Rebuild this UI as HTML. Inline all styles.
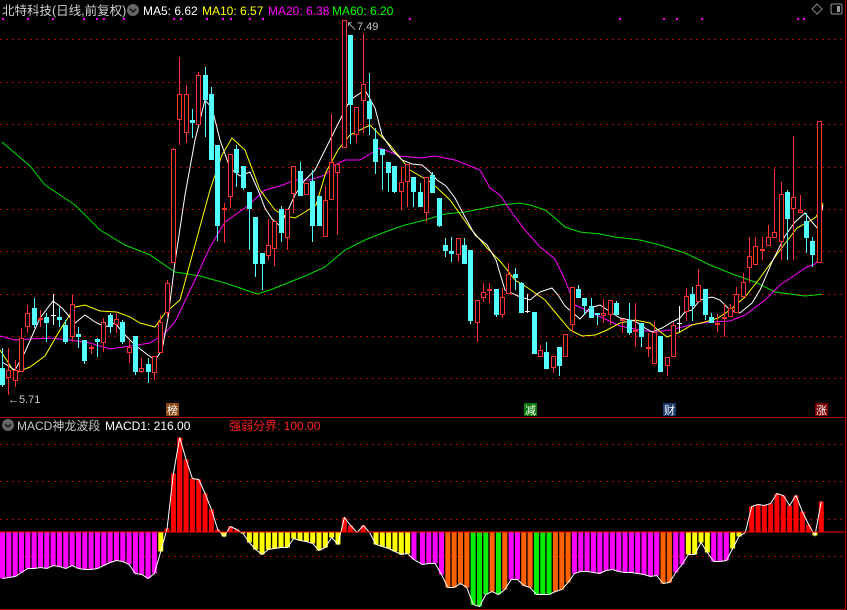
<!DOCTYPE html>
<html><head><meta charset="utf-8"><style>
html,body{margin:0;padding:0;background:#000;width:847px;height:610px;overflow:hidden}
svg{display:block}
text{font-family:"Liberation Sans","Noto Sans CJK SC",sans-serif}
</style></head><body>
<svg id="s" width="847" height="610" viewBox="0 0 847 610" xmlns="http://www.w3.org/2000/svg">
<rect width="847" height="610" fill="#000"/>
<g id="grid"></g>
<g id="ma"></g>
<g id="k"></g>
<g id="h"></g>
<line x1="0" y1="417.5" x2="846" y2="417.5" stroke="#b00000" stroke-width="1"/>
<line x1="0" y1="609.5" x2="846" y2="609.5" stroke="#b00000" stroke-width="1"/>
<line x1="845.5" y1="0" x2="845.5" y2="610" stroke="#b00000" stroke-width="1"/>
<text x="2" y="15" font-size="12.5" fill="#d0d0d0">北特科技(日线,前复权)</text>
<circle cx="133" cy="10" r="6" fill="#666"/><path d="M130 9 L133 12 L136 9" stroke="#111" stroke-width="1.4" fill="none"/>
<text x="143" y="15" font-size="12" fill="#ffffff">MA5: 6.62</text>
<text x="202" y="15" font-size="12" fill="#ffff00">MA10: 6.57</text>
<text x="268" y="15" font-size="12" fill="#ff00ff">MA20: 6.38</text>
<text x="332" y="15" font-size="12" fill="#00ff00">MA60: 6.20</text>
<path d="M817 4 L822 9 L817 14 L812 9 Z" stroke="#888" fill="none"/>
<rect x="831" y="4" width="11" height="10" rx="1.5" stroke="#999" fill="none"/><rect x="837" y="6" width="3" height="6" fill="#999"/>
<text x="8" y="403" font-size="11" fill="#c8c8c8">←5.71</text>
<text x="346" y="30" font-size="11" fill="#c8c8c8">↖7.49</text>
<rect x="166" y="403" width="13" height="13" fill="#8b4513"/><text x="167" y="414" font-size="11" fill="#fff">榜</text>
<rect x="524" y="403" width="13" height="13" fill="#0a7a0a"/><text x="525" y="414" font-size="11" fill="#fff">减</text>
<rect x="663" y="403" width="13" height="13" fill="#1a3a6a"/><text x="664" y="414" font-size="11" fill="#fff">财</text>
<rect x="815" y="403" width="13" height="13" fill="#7a0000"/><text x="816" y="414" font-size="11" fill="#fff">涨</text>
<circle cx="8" cy="425" r="6" fill="#666"/><path d="M5 424 L8 427 L11 424" stroke="#111" stroke-width="1.4" fill="none"/>
<text x="17" y="430" font-size="12" fill="#c8c8c8">MACD神龙波段</text>
<text x="105" y="430" font-size="12" fill="#ffffff">MACD1: 216.00</text>
<text x="229" y="430" font-size="12" fill="#ff2020">强弱分界: 100.00</text>
</svg>
<script>
var NS="http://www.w3.org/2000/svg";
function el(p,t,a){var e=document.createElementNS(NS,t);for(var k in a)e.setAttribute(k,a[k]);document.getElementById(p).appendChild(e);return e;}
// grid
[39,82,124,167,209,251,294,336,378,444,481,519,556].forEach(function(y){el("grid","line",{x1:0,y1:y+.5,x2:845,y2:y+.5,stroke:"#b00000","stroke-dasharray":"2,4"});});
[2,27,52,83,96,103,123,173,180,206,222,230,249,262,409,619,663,676,701,797,803].forEach(function(x){el("grid","rect",{x:x,y:18,width:2,height:2,fill:"#ff00ff"});});
// candles: [type, bodyTop, bodyBot, wickTop, wickBot]  type r=red c=cyan w=white doji
var K=[
["c",368,385,348,387],["r",370,378,348,395],["r",370,381,360,387],["r",338,372,328,372],["r",313,327,305,333],["c",308,325,298,328],["r",318,320,310,327],["c",317,323,313,342],["w",315,316,294,325],["c",317,320,307,327],
["c",325,342,320,344],["r",304,337,295,342],["c",334,337,327,348],["c",340,361,340,364],["r",347,349,345,354],["c",339,342,338,357],["r",322,343,318,352],["c",315,327,313,333],["r",319,325,313,333],["c",322,342,320,344],
["r",347,353,340,363],["c",336,372,336,375],["r",368,372,358,373],["c",364,372,358,383],["r",356,373,356,380],["r",322,353,315,353],["r",283,313,280,317],["r",149,263,148,263],["r",94,120,57,145],["r",94,133,85,143],
["c",120,123,109,138],["r",75,125,72,125],["c",75,100,67,137],["c",94,160,87,160],["c",145,226,145,241],["r",208,210,203,243],["r",154,197,154,208],["c",149,173,145,187],["c",166,188,166,190],["c",192,209,192,250],
["c",217,264,217,277],["c",253,264,253,290],["r",245,256,219,260],["r",221,249,221,266],["c",209,233,206,242],["r",209,238,209,250],["r",166,194,166,213],["c",171,196,162,196],["r",183,195,183,195],["c",181,226,170,242],
["c",196,226,196,226],["r",200,237,186,237],["r",162,200,114,200],["r",164,173,164,235],["r",20,148,20,148],["c",35,105,35,144],["r",107,135,107,143],["r",84,101,34,133],["c",101,119,73,135],["c",139,162,128,174],
["c",149,155,149,190],["c",162,173,162,192],["c",166,192,166,193],["r",182,192,167,210],["r",164,182,164,207],["c",177,192,177,207],["c",192,207,183,207],["r",177,213,177,222],["c",175,193,172,193],["c",198,226,198,227],
["c",245,251,238,257],["c",251,254,237,262],["r",238,255,238,262],["c",245,264,238,264],["c",250,321,250,324],["r",300,323,300,342],["r",292,298,283,302],["r",289,291,283,303],["c",289,315,289,317],["r",297,315,288,318],
["r",274,294,263,294],["c",274,278,268,290],["c",283,313,282,313],["w",311,312,294,313],["c",312,354,312,354],["r",350,357,345,357],["c",352,369,342,369],["r",356,368,356,373],["c",347,366,347,376],["r",334,357,334,357],
["r",287,325,287,332],["c",289,298,285,298],["c",298,306,298,315],["c",306,318,298,318],["c",313,315,313,325],["r",313,316,299,323],["r",300,315,300,325],["c",303,315,301,315],["r",319,321,319,333],["c",320,333,303,335],
["r",330,332,303,347],["c",323,337,323,347],["r",347,349,333,357],["r",332,364,322,364],["c",336,372,336,372],["r",357,366,357,376],["r",325,357,322,357],["w",323,324,306,332],["r",296,312,288,321],["c",294,306,287,321],
["r",285,302,269,302],["c",289,315,289,320],["c",317,323,313,323],["r",323,325,314,332],["r",317,319,304,337],["r",308,317,304,317],["r",294,313,287,313],["r",282,297,273,297],["r",256,268,237,283],["r",246,265,237,265],
["r",249,251,237,260],["r",237,246,225,246],["r",232,238,169,238],["r",194,242,182,260],["c",192,219,190,260],["r",197,209,136,260],["r",210,213,195,213],["c",221,238,213,253],["c",241,255,237,267],["r",121,263,121,263]];
var S=6.33;
K.forEach(function(c,i){
 var x=Math.round(i*S)+2.5,col=c[0]=="r"?"#ff3030":c[0]=="c"?"#54ffff":"#ffffff";
 el("k","line",{x1:x,y1:c[3],x2:x,y2:c[4],stroke:col,"stroke-width":1});
 var h=Math.max(1,c[2]-c[1]);
 if(c[0]=="r"){el("k","rect",{x:x-2,y:c[1]+.5,width:4,height:h-1<1?1:h-1,fill:"#000",stroke:col,"stroke-width":1});}
 else if(c[0]=="c"){el("k","rect",{x:x-2.5,y:c[1],width:5,height:h,fill:col});}
 else{el("k","line",{x1:x-2.5,y1:c[1]+.5,x2:x+2.5,y2:c[1]+.5,stroke:col});}
});
function pl(pts,col){el("ma","polyline",{points:pts.map(function(p){return p.join(",")}).join(" "),fill:"none",stroke:col,"stroke-width":1});}
pl([[2,142],[30,166],[45,185],[75,205],[100,230],[125,245],[150,255],[175,272],[200,276],[225,283],[240,288],[257,294],[270,290],[290,282],[305,276],[325,267],[345,250],[365,240],[385,232],[405,225],[425,220],[445,214],[465,212],[485,208],[500,205],[520,203],[530,205],[545,210],[555,218],[565,227],[580,232],[600,234],[615,237],[640,240],[660,245],[685,253],[710,265],[735,275],[755,282],[775,292],[790,294],[805,296],[815,295],[822,294]],"#00e000");
pl([[0,336],[15,340],[30,339],[50,338],[70,340],[90,343],[110,349],[130,346],[150,343],[163,335],[175,322],[195,280],[210,247],[225,222],[245,208],[265,190],[280,186],[295,180],[310,180],[325,175],[335,165],[345,160],[360,160],[380,148],[400,156],[420,158],[435,156],[455,160],[470,166],[480,170],[490,188],[500,195],[510,210],[525,230],[540,247],[555,259],[565,280],[575,305],[590,312],[605,319],[620,326],[640,330],[655,332],[670,330],[690,325],[710,322],[730,321],[745,315],[765,300],[780,285],[795,275],[805,268],[815,264],[822,255]],"#ff00ff");
pl([[0,350],[15,373],[30,367],[45,356],[60,330],[75,307],[85,305],[100,311],[117,312],[130,317],[140,323],[155,327],[165,313],[180,300],[195,245],[210,190],[222,155],[232,138],[245,150],[260,190],[275,210],[285,216],[295,218],[305,212],[316,205],[326,172],[338,150],[350,135],[370,125],[390,145],[410,170],[432,183],[450,200],[470,228],[487,248],[500,261],[515,280],[528,288],[545,300],[560,318],[570,330],[582,336],[595,335],[605,331],[620,323],[635,320],[650,323],[658,330],[667,337],[680,332],[692,325],[705,322],[718,318],[730,310],[745,297],[760,278],[780,250],[797,228],[808,222],[816,217],[823,203]],"#ffff00");
pl([[2,362],[15,370],[25,352],[40,318],[53,301],[62,308],[75,323],[85,315],[95,322],[105,327],[115,323],[125,335],[135,345],[148,355],[155,360],[162,350],[168,318],[175,262],[185,195],[195,140],[205,100],[212,108],[220,140],[230,168],[240,176],[250,172],[258,190],[265,208],[272,219],[280,226],[288,210],[295,195],[305,180],[315,170],[320,160],[330,140],[340,120],[350,100],[365,90],[375,108],[382,135],[392,150],[402,160],[412,164],[422,165],[430,172],[437,180],[446,186],[455,198],[465,217],[475,235],[487,245],[496,260],[505,290],[518,296],[530,300],[540,292],[552,288],[558,295],[565,306],[580,319],[590,308],[600,305],[612,313],[620,318],[635,321],[645,328],[652,332],[662,328],[672,322],[680,318],[685,312],[692,310],[700,300],[712,297],[720,300],[730,310],[740,313],[752,303],[760,290],[772,262],[785,236],[795,222],[805,213],[812,222],[818,229],[823,205]],"#ffffff");
// histogram
var M="#ff00ff",Y="#ffff00",R="#ff0000",O="#ff6000",G="#00ee00";
var L=[[-47,M],[-46,M],[-45,M],[-41,M],[-37,M],[-37,M],[-36,M],[-37,M],[-34,M],[-35,M],[-37,M],[-34,M],[-37,M],[-38,M],[-38,M],[-37,M],[-34,M],[-31,M],[-29,M],[-30,M],[-33,M],[-42,M],[-43,M],[-47,M],[-42,M],
[-20,Y],[3,R],[58,R],[94,R],[72,R],[53,R],[52,R],[38,R],[22,R],[2,R],[-5,Y],[5,R],[2,R],[-2,Y],[-11,Y],[-18,Y],[-23,Y],[-18,Y],[-17,Y],[-16,Y],[-16,Y],[-7,Y],[-9,Y],[-10,Y],[-12,Y],[-19,Y],[-16,Y],[-6,Y],[-13,Y],
[14,R],[6,R],[-1,Y],[6,R],[-1,Y],[-13,Y],[-15,Y],[-17,Y],[-20,Y],[-23,Y],[-22,Y],[-28,M]];
var Rr=[[-33,M],[-32,M],[-32,M],[-43,M],[-56,O],[-56,O],[-52,O],[-56,O],[-73,G],[-75,G],[-63,G],[-60,O],[-63,G],[-58,O],[-48,M],[-48,M],[-54,O],[-56,O],[-63,G],[-63,G],[-63,G],[-60,O],[-58,O],[-51,O],
[-42,M],[-40,M],[-40,M],[-41,M],[-42,M],[-39,M],[-38,M],[-40,M],[-41,M],[-41,M],[-42,M],[-43,M],[-45,M],[-44,M],[-52,O],[-51,O],[-41,M],[-33,M],[-23,Y],[-23,Y],[-11,Y],[-21,Y],[-30,M],[-30,M],[-29,M],[-17,Y],[-5,Y],[-1,Y],
[25,R],[27,R],[26,R],[28,R],[38,R],[36,R],[26,R],[36,R],[20,R],[7,R],[-4,Y],[30,R]];
var B=531.5,pts=[];
function bar(x,v,c){var y=v>0?B-v:B,h=Math.abs(v);if(h<1)h=1;el("h","rect",{x:x,y:y,width:5,height:h,fill:c});pts.push([x+2.5,B-v]);}
L.forEach(function(d,i){bar(i*6.33,d[0],d[1]);});
Rr.forEach(function(d,j){bar(420+j*6.33,d[0],d[1]);});
el("h","polyline",{points:pts.map(function(p){return p.join(",")}).join(" "),fill:"none",stroke:"#fff","stroke-width":1});
el("h","line",{x1:0,y1:B+.5,x2:845,y2:B+.5,stroke:"#ff0000","stroke-width":1});
</script>
</body></html>
